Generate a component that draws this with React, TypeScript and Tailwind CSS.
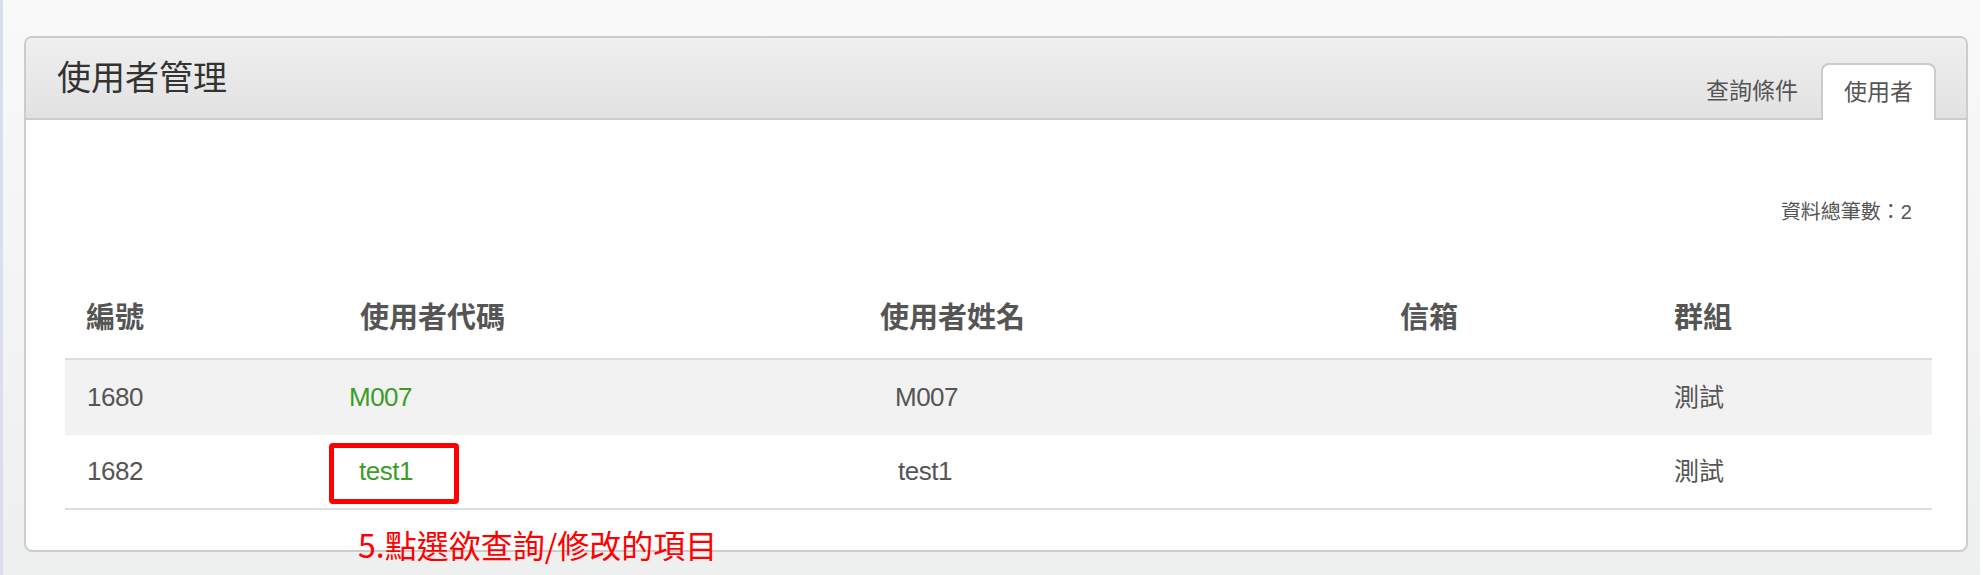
export default function App() {
  const rows = [
    { id: '1680', code: 'M007', name: 'M007', mail: '', group: '測試', stripe: true, codeShift: 'ml-[-11px]', nameShift: 'ml-[15px]' },
    { id: '1682', code: 'test1', name: 'test1', mail: '', group: '測試', stripe: false, codeShift: 'ml-[-1px]', nameShift: 'ml-[18px]' },
  ];

  return (
    <div className="relative flex h-[575px] w-full bg-[#eeefef] font-['Liberation_Sans','Noto_Sans_CJK_TC',sans-serif]">
      <div className="w-[3px] bg-[#d8dfea]" />
      <div className="flex-1 bg-gradient-to-b from-[#f9f9f9] to-[#eeefef] pl-[21px] pr-[12px] pt-[36px]">
        <section className="h-[516px] overflow-hidden rounded-[8px] border-2 border-[#cccccc] bg-white">
          {/* header with tabs */}
          <header className="flex h-[82px] items-end justify-between border-b-2 border-[#cccccc] bg-gradient-to-b from-[#efefef] to-[#e2e2e2] pl-[31px] pr-[30px]">
            <h1 className="self-center text-[34px] leading-none text-[#333]">使用者管理</h1>
            <nav className="-mb-[2px] flex">
              <div className="flex h-[57px] items-center px-[23px] text-[23px] leading-none text-[#555]">查詢條件</div>
              <div className="flex h-[57px] items-center rounded-t-[8px] border-2 border-b-0 border-[#cccccc] bg-white px-[21px] text-[23px] leading-none text-[#555]">
                使用者
              </div>
            </nav>
          </header>

          <div className="pl-[39px] pr-[34px] pt-[82px]">
            <div className="pr-[20px] text-right text-[20px] leading-none text-[#555]">資料總筆數：2</div>

            <div className="mt-[58px]">
              <div className="grid h-[80px] grid-cols-[274px_520px_520px_274px_1fr] items-center border-b-2 border-[#dddddd] pl-[21px] text-[29px] font-bold text-[#555]">
                <span>編號</span>
                <span>使用者代碼</span>
                <span>使用者姓名</span>
                <span>信箱</span>
                <span>群組</span>
              </div>
              {rows.map((r, i) => (
                <div
                  key={r.id}
                  className={`grid grid-cols-[274px_520px_520px_274px_1fr] items-center pl-[21px] text-[26px] tracking-[-0.5px] text-[#555] ${
                    r.stripe ? 'h-[75px] bg-[#f2f2f2]' : 'h-[75px]'
                  } ${i === rows.length - 1 ? 'border-b-2 border-[#dddddd]' : ''}`}
                >
                  <span className="ml-[1px]">{r.id}</span>
                  <span className={`${r.codeShift} text-[#3a9d28]`}>{r.code}</span>
                  <span className={r.nameShift}>{r.name}</span>
                  <span>{r.mail}</span>
                  <span className="text-[25px] tracking-normal">{r.group}</span>
                </div>
              ))}
            </div>
          </div>
        </section>
      </div>
      <div className="w-[3px] bg-white" />

      {/* annotation overlay */}
      <div className="absolute left-[329px] top-[443px] h-[61px] w-[130px] rounded-[4px] border-[5px] border-[#ff0000]" />
      <div className="absolute left-[358px] top-[528px] text-[32px] leading-none text-[#ff0000] font-['Noto_Sans_CJK_TC',sans-serif]">
        5.點選欲查詢/修改的項目
      </div>
    </div>
  );
}
